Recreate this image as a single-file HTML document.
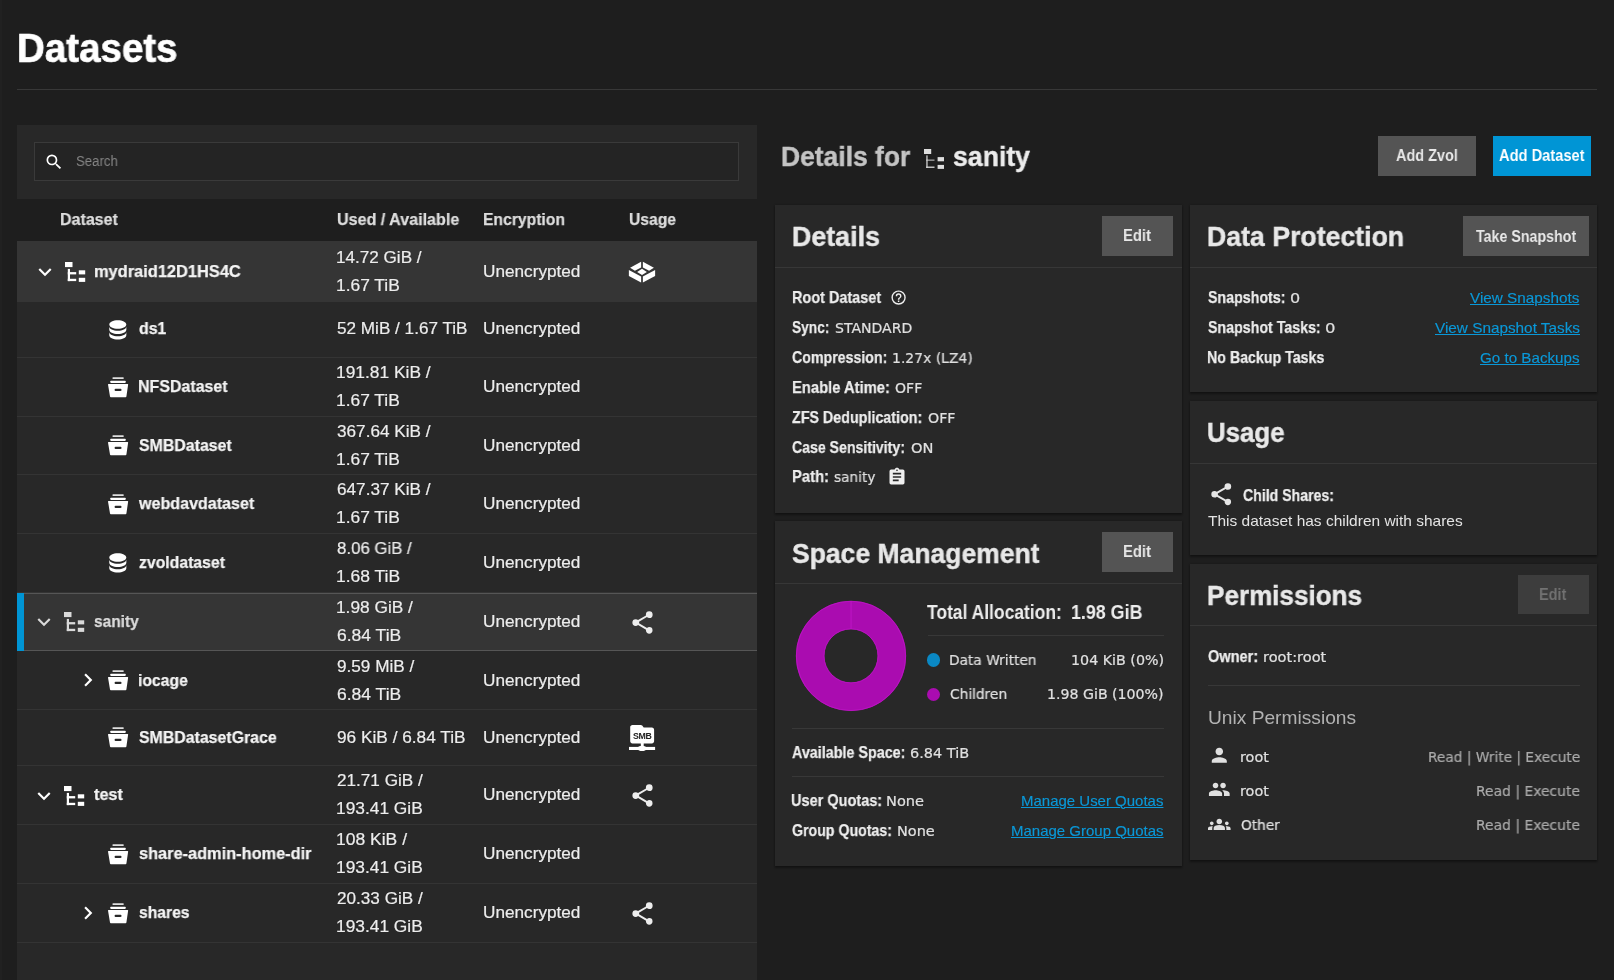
<!DOCTYPE html>
<html lang="en"><head><meta charset="utf-8"><title>Datasets</title>
<style>
html,body{margin:0;padding:0}
body{width:1614px;height:980px;overflow:hidden;background:#1e1e1e;position:relative;font-family:"Liberation Sans",sans-serif}
.strip{position:absolute;left:0;top:0;width:2px;height:980px;background:#212121}
.hr{position:absolute;height:1px;background:#383838}
.hr2{position:absolute;height:1px;background:#383838}
.panel{position:absolute;background:#282828}
.thead{position:absolute;background:#1e1e1e}
.search{position:absolute;background:#242424;border:1px solid #3a3a3a}
.row{position:absolute;left:17px;width:740px}
.row.hover{background:#353535}
.row.sel{background:#353535;box-sizing:border-box;border-top:1px solid #565656;border-bottom:1px solid #565656}
.selbar{position:absolute;left:17px;width:7px;background:#0095d5}
.sep{position:absolute;left:17px;width:740px;height:1px;background:#343434}
.i{position:absolute;display:block;overflow:visible;will-change:transform}
.btn{position:absolute;background:#545454}
.btn.blue{background:#0095d5}
.btn.dis{background:#3d3d3d}
.card{position:absolute;background:#282828;box-shadow:0 2px 2px rgba(0,0,0,.35),0 0 2px rgba(0,0,0,.25)}
.chr{position:absolute;height:1px;background:#373737}
.dot{position:absolute;width:13.6px;height:13.6px;border-radius:50%}
.t{position:absolute;will-change:transform;transform-origin:0 50%;white-space:pre;line-height:20px;font-family:"Liberation Sans",sans-serif}
.t.d{font-family:"DejaVu Sans","Liberation Sans",sans-serif;-webkit-text-stroke:.2px currentColor}
</style></head>
<body>
<div class="strip"></div>
<div class="hr" style="left:17px;top:89px;width:1580px"></div>
<div class="panel" style="left:17px;top:125px;width:740px;height:855px"></div>
<div class="thead" style="left:17px;top:199px;width:740px;height:42px"></div>
<div class="search" style="left:34px;top:142px;width:703px;height:37px"></div>
<svg class="i" style="left:43.80px;top:151.80px" width="20" height="20" viewBox="0 0 24 24"><path fill="#ffffff" d="M9.5,3A6.5,6.5 0 0,1 16,9.5C16,11.11 15.41,12.59 14.44,13.73L14.71,14H15.5L20.5,19L19,20.5L14,15.5V14.71L13.73,14.44C12.59,15.41 11.11,16 9.5,16A6.5,6.5 0 0,1 3,9.5A6.5,6.5 0 0,1 9.5,3M9.5,5C7,5 5,7 5,9.5C5,12 7,14 9.5,14C12,14 14,12 14,9.5C14,7 12,5 9.5,5Z"/></svg>
<div class="row hover" style="top:241px;height:61px"></div>
<svg class="i" style="left:32.25px;top:259.00px" width="26" height="26" viewBox="0 0 24 24"><path fill="#ffffff" d="M7.41,8.58L12,13.17L16.59,8.58L18,10L12,16L6,10L7.41,8.58Z"/></svg>
<svg class="i" style="left:64.70px;top:261.90px" width="21" height="21" viewBox="0 0 21 21" fill="#ffffff"><rect x="0" y="0" width="7.5" height="5.1"/><rect x="2.8" y="6.9" width="2.2" height="12.2"/><rect x="2.8" y="10.1" width="8.4" height="2.3"/><rect x="2.8" y="16.8" width="8.4" height="2.3"/><rect x="13.8" y="8.3" width="6.4" height="4.1"/><rect x="13.8" y="15.8" width="6.4" height="4.1"/></svg>
<svg class="i" style="left:628.00px;top:261.00px" width="28" height="22" viewBox="0 0 28 22" fill="#fff"><path d="M13.100.700L2.100 6.700L6.900 9.800L13.100 6.500z"/><path d="M14.900.700L25.900 6.700L21.100 9.800L14.900 6.500z"/><path d="M14 7.800L18.900 11.100L14 14.100L9.100 11.100z"/><path d="M.900 9.100L13.100 15.500V21.400L.900 14.900z"/><path d="M27.100 9.100L14.900 15.500V21.400L27.100 14.900z"/></svg>
<div class="sep" style="top:357px"></div>
<svg class="i" style="left:105.30px;top:316.50px" width="25.6" height="25.6" viewBox="0 0 24 24"><path fill="#fff" d="M12,3C7.58,3 4,4.79 4,7C4,9.21 7.58,11 12,11C16.42,11 20,9.21 20,7C20,4.79 16.42,3 12,3M4,9V12C4,14.21 7.58,16 12,16C16.42,16 20,14.21 20,12V9C20,11.21 16.42,13 12,13C7.58,13 4,11.21 4,9M4,14V17C4,19.21 7.58,21 12,21C16.42,21 20,19.21 20,17V14C20,16.21 16.42,18 12,18C7.58,18 4,16.21 4,14Z"/></svg>
<div class="sep" style="top:416px"></div>
<svg class="i" style="left:108.20px;top:376.95px" width="21" height="21" viewBox="0 0 21 21" fill="#fff"><rect x="4.4" y="0.2" width="11.4" height="1.9" rx=".8" opacity=".85"/><rect x="2.2" y="3.8" width="15.6" height="2.1" rx=".8"/><path fill-rule="evenodd" d="M0.500 6.900h19.100c.4 0 .6.300 .550.700l-1.750 12c-.1.400-.400.700-.800.700H2.800c-.4 0-.7-.3-.8-.7L0 7.600c-.05-.4.100-.700.500-.700zM7.500 11.800c-.5 0-.9.400-.9.900v.3c0 .5.400.9.900.9h5.100c.5 0 .9-.4.900-.9v-.3c0-.5-.4-.9-.9-.9z"/></svg>
<div class="sep" style="top:474px"></div>
<svg class="i" style="left:108.20px;top:435.45px" width="21" height="21" viewBox="0 0 21 21" fill="#fff"><rect x="4.4" y="0.2" width="11.4" height="1.9" rx=".8" opacity=".85"/><rect x="2.2" y="3.8" width="15.6" height="2.1" rx=".8"/><path fill-rule="evenodd" d="M0.500 6.900h19.100c.4 0 .6.300 .550.700l-1.750 12c-.1.400-.400.700-.800.700H2.800c-.4 0-.7-.3-.8-.7L0 7.600c-.05-.4.100-.700.500-.700zM7.500 11.800c-.5 0-.9.400-.9.900v.3c0 .5.400.9.900.9h5.100c.5 0 .9-.4.900-.9v-.3c0-.5-.4-.9-.9-.9z"/></svg>
<div class="sep" style="top:533px"></div>
<svg class="i" style="left:108.20px;top:493.95px" width="21" height="21" viewBox="0 0 21 21" fill="#fff"><rect x="4.4" y="0.2" width="11.4" height="1.9" rx=".8" opacity=".85"/><rect x="2.2" y="3.8" width="15.6" height="2.1" rx=".8"/><path fill-rule="evenodd" d="M0.500 6.900h19.100c.4 0 .6.300 .550.700l-1.750 12c-.1.400-.400.700-.800.700H2.800c-.4 0-.7-.3-.8-.7L0 7.600c-.05-.4.100-.700.500-.700zM7.500 11.800c-.5 0-.9.400-.9.900v.3c0 .5.400.9.900.9h5.100c.5 0 .9-.4.900-.9v-.3c0-.5-.4-.9-.9-.9z"/></svg>
<div class="sep" style="top:592px"></div>
<svg class="i" style="left:105.30px;top:550.00px" width="25.6" height="25.6" viewBox="0 0 24 24"><path fill="#fff" d="M12,3C7.58,3 4,4.79 4,7C4,9.21 7.58,11 12,11C16.42,11 20,9.21 20,7C20,4.79 16.42,3 12,3M4,9V12C4,14.21 7.58,16 12,16C16.42,16 20,14.21 20,12V9C20,11.21 16.42,13 12,13C7.58,13 4,11.21 4,9M4,14V17C4,19.21 7.58,21 12,21C16.42,21 20,19.21 20,17V14C20,16.21 16.42,18 12,18C7.58,18 4,16.21 4,14Z"/></svg>
<div class="row sel" style="top:593px;height:58px"></div>
<div class="selbar" style="top:593px;height:58px"></div>
<svg class="i" style="left:31.35px;top:609.10px" width="26" height="26" viewBox="0 0 24 24"><path fill="#dadada" d="M7.41,8.58L12,13.17L16.59,8.58L18,10L12,16L6,10L7.41,8.58Z"/></svg>
<svg class="i" style="left:63.80px;top:612.40px" width="21" height="21" viewBox="0 0 21 21" fill="#dadada"><rect x="0" y="0" width="7.5" height="5.1"/><rect x="2.8" y="6.9" width="2.2" height="12.2"/><rect x="2.8" y="10.1" width="8.4" height="2.3"/><rect x="2.8" y="16.8" width="8.4" height="2.3"/><rect x="13.8" y="8.3" width="6.4" height="4.1"/><rect x="13.8" y="15.8" width="6.4" height="4.1"/></svg>
<svg class="i" style="left:628.70px;top:608.60px" width="27" height="27" viewBox="0 0 24 24"><path fill="#ededed" d="M18,16.08C17.24,16.08 16.56,16.38 16.04,16.85L8.91,12.7C8.96,12.47 9,12.24 9,12C9,11.76 8.96,11.53 8.91,11.3L15.96,7.19C16.5,7.69 17.21,8 18,8A3,3 0 0,0 21,5A3,3 0 0,0 18,2A3,3 0 0,0 15,5C15,5.24 15.04,5.47 15.09,5.7L8.04,9.81C7.5,9.31 6.79,9 6,9A3,3 0 0,0 3,12A3,3 0 0,0 6,15C6.79,15 7.5,14.69 8.04,14.19L15.16,18.34C15.11,18.55 15.08,18.77 15.08,19C15.08,20.61 16.39,21.91 18,21.91C19.61,21.91 20.92,20.61 20.92,19A2.92,2.92 0 0,0 18,16.08Z"/></svg>
<div class="sep" style="top:709px"></div>
<svg class="i" style="left:108.20px;top:669.95px" width="21" height="21" viewBox="0 0 21 21" fill="#fff"><rect x="4.4" y="0.2" width="11.4" height="1.9" rx=".8" opacity=".85"/><rect x="2.2" y="3.8" width="15.6" height="2.1" rx=".8"/><path fill-rule="evenodd" d="M0.500 6.900h19.100c.4 0 .6.300 .550.700l-1.750 12c-.1.400-.400.700-.800.700H2.800c-.4 0-.7-.3-.8-.7L0 7.600c-.05-.4.100-.700.500-.700zM7.500 11.800c-.5 0-.9.400-.9.900v.3c0 .5.400.9.900.9h5.100c.5 0 .9-.4.900-.9v-.3c0-.5-.4-.9-.9-.9z"/></svg>
<svg class="i" style="left:75.10px;top:667.20px" width="26" height="26" viewBox="0 0 24 24"><path fill="#ffffff" d="M8.59,16.58L13.17,12L8.59,7.41L10,6L16,12L10,18L8.59,16.58Z"/></svg>
<div class="sep" style="top:765px"></div>
<svg class="i" style="left:108.20px;top:727.45px" width="21" height="21" viewBox="0 0 21 21" fill="#fff"><rect x="4.4" y="0.2" width="11.4" height="1.9" rx=".8" opacity=".85"/><rect x="2.2" y="3.8" width="15.6" height="2.1" rx=".8"/><path fill-rule="evenodd" d="M0.500 6.900h19.100c.4 0 .6.300 .550.700l-1.750 12c-.1.400-.400.700-.800.700H2.800c-.4 0-.7-.3-.8-.7L0 7.600c-.05-.4.100-.700.500-.700zM7.500 11.800c-.5 0-.9.400-.9.900v.3c0 .5.400.9.900.9h5.100c.5 0 .9-.4.900-.9v-.3c0-.5-.4-.9-.9-.9z"/></svg>
<svg class="i" style="left:628.00px;top:724.00px" width="28" height="28" viewBox="0 0 28 28"><path fill="#fff" d="M4.400.900h8.300c.6 0 1.100.200 1.500.700l1.500 2h8.200c1.200 0 2.200 1 2.200 2.200v11.500c0 1.200-1 2.200-2.200 2.200H4.400c-1.200 0-2.200-1-2.200-2.200V3.100c0-1.200 1-2.200 2.200-2.200z"/><rect fill="#fff" x="12.800" y="19" width="2.900" height="5"/><rect fill="#fff" x="1" y="22.900" width="26.100" height="3.100"/><rect fill="#fff" x="10" y="21.900" width="8.100" height="5.100" rx="2.400"/><text x="14.300" y="14.800" text-anchor="middle" font-family="Liberation Sans,sans-serif" font-size="8.8" font-weight="700" fill="#222" letter-spacing="-.3">SMB</text></svg>
<div class="sep" style="top:824px"></div>
<svg class="i" style="left:31.35px;top:782.60px" width="26" height="26" viewBox="0 0 24 24"><path fill="#ffffff" d="M7.41,8.58L12,13.17L16.59,8.58L18,10L12,16L6,10L7.41,8.58Z"/></svg>
<svg class="i" style="left:63.80px;top:785.90px" width="21" height="21" viewBox="0 0 21 21" fill="#ffffff"><rect x="0" y="0" width="7.5" height="5.1"/><rect x="2.8" y="6.9" width="2.2" height="12.2"/><rect x="2.8" y="10.1" width="8.4" height="2.3"/><rect x="2.8" y="16.8" width="8.4" height="2.3"/><rect x="13.8" y="8.3" width="6.4" height="4.1"/><rect x="13.8" y="15.8" width="6.4" height="4.1"/></svg>
<svg class="i" style="left:628.70px;top:782.10px" width="27" height="27" viewBox="0 0 24 24"><path fill="#ededed" d="M18,16.08C17.24,16.08 16.56,16.38 16.04,16.85L8.91,12.7C8.96,12.47 9,12.24 9,12C9,11.76 8.96,11.53 8.91,11.3L15.96,7.19C16.5,7.69 17.21,8 18,8A3,3 0 0,0 21,5A3,3 0 0,0 18,2A3,3 0 0,0 15,5C15,5.24 15.04,5.47 15.09,5.7L8.04,9.81C7.5,9.31 6.79,9 6,9A3,3 0 0,0 3,12A3,3 0 0,0 6,15C6.79,15 7.5,14.69 8.04,14.19L15.16,18.34C15.11,18.55 15.08,18.77 15.08,19C15.08,20.61 16.39,21.91 18,21.91C19.61,21.91 20.92,20.61 20.92,19A2.92,2.92 0 0,0 18,16.08Z"/></svg>
<div class="sep" style="top:883px"></div>
<svg class="i" style="left:108.20px;top:843.95px" width="21" height="21" viewBox="0 0 21 21" fill="#fff"><rect x="4.4" y="0.2" width="11.4" height="1.9" rx=".8" opacity=".85"/><rect x="2.2" y="3.8" width="15.6" height="2.1" rx=".8"/><path fill-rule="evenodd" d="M0.500 6.900h19.100c.4 0 .6.300 .550.700l-1.750 12c-.1.400-.400.700-.800.700H2.800c-.4 0-.7-.3-.8-.7L0 7.600c-.05-.4.100-.700.500-.700zM7.500 11.800c-.5 0-.9.400-.9.900v.3c0 .5.400.9.900.9h5.100c.5 0 .9-.4.900-.9v-.3c0-.5-.4-.9-.9-.9z"/></svg>
<div class="sep" style="top:942px"></div>
<svg class="i" style="left:108.20px;top:902.95px" width="21" height="21" viewBox="0 0 21 21" fill="#fff"><rect x="4.4" y="0.2" width="11.4" height="1.9" rx=".8" opacity=".85"/><rect x="2.2" y="3.8" width="15.6" height="2.1" rx=".8"/><path fill-rule="evenodd" d="M0.500 6.900h19.100c.4 0 .6.300 .550.700l-1.750 12c-.1.400-.400.700-.800.700H2.800c-.4 0-.7-.3-.8-.7L0 7.600c-.05-.4.100-.700.500-.700zM7.500 11.800c-.5 0-.9.400-.9.900v.3c0 .5.400.9.900.9h5.100c.5 0 .9-.4.900-.9v-.3c0-.5-.4-.9-.9-.9z"/></svg>
<svg class="i" style="left:75.10px;top:900.20px" width="26" height="26" viewBox="0 0 24 24"><path fill="#ffffff" d="M8.59,16.58L13.17,12L8.59,7.41L10,6L16,12L10,18L8.59,16.58Z"/></svg>
<svg class="i" style="left:628.70px;top:900.10px" width="27" height="27" viewBox="0 0 24 24"><path fill="#ededed" d="M18,16.08C17.24,16.08 16.56,16.38 16.04,16.85L8.91,12.7C8.96,12.47 9,12.24 9,12C9,11.76 8.96,11.53 8.91,11.3L15.96,7.19C16.5,7.69 17.21,8 18,8A3,3 0 0,0 21,5A3,3 0 0,0 18,2A3,3 0 0,0 15,5C15,5.24 15.04,5.47 15.09,5.7L8.04,9.81C7.5,9.31 6.79,9 6,9A3,3 0 0,0 3,12A3,3 0 0,0 6,15C6.79,15 7.5,14.69 8.04,14.19L15.16,18.34C15.11,18.55 15.08,18.77 15.08,19C15.08,20.61 16.39,21.91 18,21.91C19.61,21.91 20.92,20.61 20.92,19A2.92,2.92 0 0,0 18,16.08Z"/></svg>
<svg class="i" style="left:924.1px;top:148.9px" width="21" height="21" viewBox="0 0 21 21" fill="#dedede"><rect x="0" y="0" width="7.2" height="5"/><rect x="2.2" y="6.4" width="1.5" height="12.6" opacity=".8"/><rect x="2.2" y="10.500" width="8.3" height="1.3" opacity=".7"/><rect x="2.2" y="17.5" width="8.3" height="1.5" opacity=".85"/><rect x="13.6" y="8.1" width="6.4" height="4.2"/><rect x="13.6" y="15.9" width="6.4" height="4"/></svg>
<div class="btn" style="left:1378px;top:136px;width:98px;height:40px"></div>
<div class="btn blue" style="left:1493px;top:136px;width:98px;height:40px"></div>
<div class="card" style="left:775px;top:205px;width:407px;height:308px"></div>
<div class="chr" style="left:775px;top:267px;width:407px"></div>
<div class="card" style="left:775px;top:521px;width:407px;height:345px"></div>
<div class="chr" style="left:775px;top:583px;width:407px"></div>
<div class="card" style="left:1190px;top:205px;width:407px;height:187px"></div>
<div class="chr" style="left:1190px;top:267px;width:407px"></div>
<div class="card" style="left:1190px;top:401px;width:407px;height:154px"></div>
<div class="chr" style="left:1190px;top:463px;width:407px"></div>
<div class="card" style="left:1190px;top:564px;width:407px;height:296px"></div>
<div class="chr" style="left:1190px;top:625px;width:407px"></div>
<div class="btn" style="left:1102px;top:216px;width:71px;height:40px"></div>
<div class="btn" style="left:1102px;top:532px;width:71px;height:40px"></div>
<div class="btn" style="left:1463px;top:216px;width:126px;height:40px"></div>
<div class="btn dis" style="left:1518px;top:575px;width:71px;height:39px"></div>
<svg class="i" style="left:890.00px;top:288.80px" width="17.2" height="17.2" viewBox="0 0 24 24"><path fill="#f0f0f0" d="M11,18H13V16H11V18M12,2A10,10 0 0,0 2,12A10,10 0 0,0 12,22A10,10 0 0,0 22,12A10,10 0 0,0 12,2M12,20C7.59,20 4,16.41 4,12C4,7.59 7.59,4 12,4C16.41,4 20,7.59 20,12C20,16.41 16.41,20 12,20M12,6A4,4 0 0,0 8,10H10A2,2 0 0,1 12,8A2,2 0 0,1 14,10C14,12 11,11.75 11,15H13C13,12.75 16,12.5 16,10A4,4 0 0,0 12,6Z"/></svg>
<svg class="i" style="left:886.90px;top:467.10px" width="20" height="20" viewBox="0 0 24 24"><path fill="#f0f0f0" d="M17,9H7V7H17M17,13H7V11H17M14,17H7V15H14M12,3A1,1 0 0,1 13,4A1,1 0 0,1 12,5A1,1 0 0,1 11,4A1,1 0 0,1 12,3M19,3H14.82C14.4,1.84 13.3,1 12,1C10.7,1 9.6,1.84 9.18,3H5A2,2 0 0,0 3,5V19A2,2 0 0,0 5,21H19A2,2 0 0,0 21,19V5A2,2 0 0,0 19,3Z"/></svg>
<svg class="i" style="left:1207.90px;top:481.20px" width="26.5" height="26.5" viewBox="0 0 24 24"><path fill="#e6e6e6" d="M18,16.08C17.24,16.08 16.56,16.38 16.04,16.85L8.91,12.7C8.96,12.47 9,12.24 9,12C9,11.76 8.96,11.53 8.91,11.3L15.96,7.19C16.5,7.69 17.21,8 18,8A3,3 0 0,0 21,5A3,3 0 0,0 18,2A3,3 0 0,0 15,5C15,5.24 15.04,5.47 15.09,5.7L8.04,9.81C7.5,9.31 6.79,9 6,9A3,3 0 0,0 3,12A3,3 0 0,0 6,15C6.79,15 7.5,14.69 8.04,14.19L15.16,18.34C15.11,18.55 15.08,18.77 15.08,19C15.08,20.61 16.39,21.91 18,21.91C19.61,21.91 20.92,20.61 20.92,19A2.92,2.92 0 0,0 18,16.08Z"/></svg>
<div class="hr2" style="left:1208px;top:685px;width:372px"></div>
<svg class="i" style="left:1207.90px;top:744.20px" width="22.6" height="22.6" viewBox="0 0 24 24"><path fill="#e0e0e0" d="M12 12c2.21 0 4-1.79 4-4s-1.79-4-4-4-4 1.79-4 4 1.79 4 4 4zm0 2c-2.67 0-8 1.34-8 4v2h16v-2c0-2.660-5.330-4-8-4z"/></svg>
<svg class="i" style="left:1208.00px;top:778.10px" width="22.6" height="22.6" viewBox="0 0 24 24"><path fill="#e0e0e0" d="M16 11c1.66 0 2.99-1.34 2.99-3S17.66 5 16 5c-1.66 0-3 1.34-3 3s1.34 3 3 3zm-8 0c1.66 0 2.99-1.34 2.99-3S9.66 5 8 5C6.34 5 5 6.34 5 8s1.34 3 3 3zm0 2c-2.33 0-7 1.17-7 3.5V19h14v-2.500c0-2.33-4.67-3.5-7-3.500zm8 0c-.29 0-.62.02-.97.05 1.16.84 1.970 1.97 1.970 3.450V19h6v-2.500c0-2.330-4.670-3.500-7-3.500z"/></svg>
<svg class="i" style="left:1208.30px;top:812.50px" width="22.6" height="22.6" viewBox="0 0 24 24"><path fill="#e0e0e0" d="M12 12.75c1.63 0 3.07.39 4.24.9 1.08.48 1.76 1.56 1.76 2.73V18H6v-1.61c0-1.18.68-2.26 1.76-2.73 1.17-.52 2.61-.91 4.24-.91zM4 13c1.1 0 2-.9 2-2s-.9-2-2-2-2 .9-2 2 .9 2 2 2zm1.13 1.1c-.37-.06-.74-.1-1.13-.1-.99 0-1.93.21-2.78.58C.48 14.9 0 15.62 0 16.43V18h4.5v-1.61c0-.83.23-1.61.63-2.29zM20 13c1.1 0 2-.9 2-2s-.9-2-2-2-2 .9-2 2 .9 2 2 2zm4 3.43c0-.81-.48-1.53-1.22-1.85-.85-.37-1.79-.58-2.78-.58-.39 0-.76.04-1.13.1.4.68.63 1.46.63 2.29V18H24v-1.570zM12 6c1.66 0 3 1.34 3 3s-1.34 3-3 3-3-1.340-3-3 1.340-3 3-3z"/></svg>
<svg class="i" style="left:795px;top:600px" width="112" height="112" viewBox="0 0 112 112"><circle cx="56" cy="55.900" r="40.850" fill="none" stroke="#aa0cb0" stroke-width="28.300"/><circle cx="56" cy="55.900" r="54.700" fill="none" stroke="#c015c8" stroke-width=".8"/><circle cx="56" cy="55.900" r="27" fill="none" stroke="#c015c8" stroke-width=".8"/><rect x="55.600" y="1" width=".9" height="28" fill="#c015c8"/></svg>
<div class="hr2" style="left:928px;top:635px;width:236px"></div>
<div class="dot" style="left:926.7px;top:653.200px;background:#0a88c4"></div>
<div class="dot" style="left:926.7px;top:687.600px;background:#aa0cb0"></div>
<div class="hr2" style="left:792px;top:728px;width:372px"></div>
<div class="hr2" style="left:792px;top:776px;width:372px"></div>
<span class="t" style="left:16.67px;top:38.00px;font-size:39.8px;color:#ffffff;transform:scaleX(0.9675);font-weight:700;-webkit-text-stroke:.7px currentColor;">Datasets</span>
<span class="t" style="left:76.36px;top:151.00px;font-size:14px;color:#858585;transform:scaleX(0.9442);">Search</span>
<span class="t" style="left:60.06px;top:210.00px;font-size:17px;color:#dedede;transform:scaleX(0.9426);font-weight:700;-webkit-text-stroke:.25px currentColor;">Dataset</span>
<span class="t" style="left:336.55px;top:210.00px;font-size:17px;color:#dedede;transform:scaleX(0.9469);font-weight:700;-webkit-text-stroke:.25px currentColor;">Used / Available</span>
<span class="t" style="left:482.78px;top:210.00px;font-size:17px;color:#dedede;transform:scaleX(0.9230);font-weight:700;-webkit-text-stroke:.25px currentColor;">Encryption</span>
<span class="t" style="left:628.78px;top:210.00px;font-size:17px;color:#dedede;transform:scaleX(0.9220);font-weight:700;-webkit-text-stroke:.25px currentColor;">Usage</span>
<span class="t" style="left:94.14px;top:262.00px;font-size:17px;color:#f4f4f4;transform:scaleX(0.9649);font-weight:700;-webkit-text-stroke:.25px currentColor;">mydraid12D1HS4C</span>
<span class="t" style="left:335.99px;top:248.00px;font-size:17px;color:#ededed;transform:scaleX(1.0060);-webkit-text-stroke:.2px currentColor;">14.72 GiB /</span>
<span class="t" style="left:335.98px;top:276.00px;font-size:17px;color:#ededed;transform:scaleX(1.0230);-webkit-text-stroke:.2px currentColor;">1.67 TiB</span>
<span class="t" style="left:482.59px;top:262.00px;font-size:17px;color:#ededed;transform:scaleX(1.0105);-webkit-text-stroke:.2px currentColor;">Unencrypted</span>
<span class="t" style="left:139.20px;top:319.00px;font-size:17px;color:#f4f4f4;transform:scaleX(0.9310);font-weight:700;-webkit-text-stroke:.25px currentColor;">ds1</span>
<span class="t" style="left:337.00px;top:319.00px;font-size:17px;color:#ededed;transform:scaleX(1.0078);-webkit-text-stroke:.2px currentColor;">52 MiB / 1.67 TiB</span>
<span class="t" style="left:482.59px;top:319.00px;font-size:17px;color:#ededed;transform:scaleX(1.0105);-webkit-text-stroke:.2px currentColor;">Unencrypted</span>
<span class="t" style="left:137.86px;top:377.00px;font-size:17px;color:#f4f4f4;transform:scaleX(0.9389);font-weight:700;-webkit-text-stroke:.25px currentColor;">NFSDataset</span>
<span class="t" style="left:335.98px;top:363.00px;font-size:17px;color:#ededed;transform:scaleX(1.0217);-webkit-text-stroke:.2px currentColor;">191.81 KiB /</span>
<span class="t" style="left:335.98px;top:391.00px;font-size:17px;color:#ededed;transform:scaleX(1.0230);-webkit-text-stroke:.2px currentColor;">1.67 TiB</span>
<span class="t" style="left:482.59px;top:377.00px;font-size:17px;color:#ededed;transform:scaleX(1.0105);-webkit-text-stroke:.2px currentColor;">Unencrypted</span>
<span class="t" style="left:138.80px;top:436.00px;font-size:17px;color:#f4f4f4;transform:scaleX(0.9354);font-weight:700;-webkit-text-stroke:.25px currentColor;">SMBDataset</span>
<span class="t" style="left:337.00px;top:422.00px;font-size:17px;color:#ededed;transform:scaleX(1.0108);-webkit-text-stroke:.2px currentColor;">367.64 KiB /</span>
<span class="t" style="left:335.98px;top:450.00px;font-size:17px;color:#ededed;transform:scaleX(1.0230);-webkit-text-stroke:.2px currentColor;">1.67 TiB</span>
<span class="t" style="left:482.59px;top:436.00px;font-size:17px;color:#ededed;transform:scaleX(1.0105);-webkit-text-stroke:.2px currentColor;">Unencrypted</span>
<span class="t" style="left:138.80px;top:494.00px;font-size:17px;color:#f4f4f4;transform:scaleX(0.9459);font-weight:700;-webkit-text-stroke:.25px currentColor;">webdavdataset</span>
<span class="t" style="left:337.00px;top:480.00px;font-size:17px;color:#ededed;transform:scaleX(1.0108);-webkit-text-stroke:.2px currentColor;">647.37 KiB /</span>
<span class="t" style="left:335.98px;top:508.00px;font-size:17px;color:#ededed;transform:scaleX(1.0230);-webkit-text-stroke:.2px currentColor;">1.67 TiB</span>
<span class="t" style="left:482.59px;top:494.00px;font-size:17px;color:#ededed;transform:scaleX(1.0105);-webkit-text-stroke:.2px currentColor;">Unencrypted</span>
<span class="t" style="left:138.80px;top:553.00px;font-size:17px;color:#f4f4f4;transform:scaleX(0.9280);font-weight:700;-webkit-text-stroke:.25px currentColor;">zvoldataset</span>
<span class="t" style="left:337.00px;top:539.00px;font-size:17px;color:#ededed;transform:scaleX(0.9895);-webkit-text-stroke:.2px currentColor;">8.06 GiB /</span>
<span class="t" style="left:335.97px;top:567.00px;font-size:17px;color:#ededed;transform:scaleX(1.0279);-webkit-text-stroke:.2px currentColor;">1.68 TiB</span>
<span class="t" style="left:482.59px;top:553.00px;font-size:17px;color:#ededed;transform:scaleX(1.0105);-webkit-text-stroke:.2px currentColor;">Unencrypted</span>
<span class="t" style="left:94.30px;top:612.00px;font-size:17px;color:#dcdcdc;transform:scaleX(0.9102);font-weight:700;-webkit-text-stroke:.25px currentColor;">sanity</span>
<span class="t" style="left:335.98px;top:598.00px;font-size:17px;color:#ededed;transform:scaleX(1.0173);-webkit-text-stroke:.2px currentColor;">1.98 GiB /</span>
<span class="t" style="left:337.00px;top:626.00px;font-size:17px;color:#ededed;transform:scaleX(1.0290);-webkit-text-stroke:.2px currentColor;">6.84 TiB</span>
<span class="t" style="left:482.59px;top:612.00px;font-size:17px;color:#ededed;transform:scaleX(1.0105);-webkit-text-stroke:.2px currentColor;">Unencrypted</span>
<span class="t" style="left:137.88px;top:671.00px;font-size:17px;color:#f4f4f4;transform:scaleX(0.9245);font-weight:700;-webkit-text-stroke:.25px currentColor;">iocage</span>
<span class="t" style="left:337.00px;top:657.00px;font-size:17px;color:#ededed;transform:scaleX(1.0091);-webkit-text-stroke:.2px currentColor;">9.59 MiB /</span>
<span class="t" style="left:337.00px;top:685.00px;font-size:17px;color:#ededed;transform:scaleX(1.0290);-webkit-text-stroke:.2px currentColor;">6.84 TiB</span>
<span class="t" style="left:482.59px;top:671.00px;font-size:17px;color:#ededed;transform:scaleX(1.0105);-webkit-text-stroke:.2px currentColor;">Unencrypted</span>
<span class="t" style="left:138.80px;top:728.00px;font-size:17px;color:#f4f4f4;transform:scaleX(0.9340);font-weight:700;-webkit-text-stroke:.25px currentColor;">SMBDatasetGrace</span>
<span class="t" style="left:337.00px;top:728.00px;font-size:17px;color:#ededed;transform:scaleX(1.0151);-webkit-text-stroke:.2px currentColor;">96 KiB / 6.84 TiB</span>
<span class="t" style="left:482.59px;top:728.00px;font-size:17px;color:#ededed;transform:scaleX(1.0105);-webkit-text-stroke:.2px currentColor;">Unencrypted</span>
<span class="t" style="left:94.30px;top:785.00px;font-size:17px;color:#f4f4f4;transform:scaleX(0.9567);font-weight:700;-webkit-text-stroke:.25px currentColor;">test</span>
<span class="t" style="left:337.00px;top:771.00px;font-size:17px;color:#ededed;transform:scaleX(1.0082);-webkit-text-stroke:.2px currentColor;">21.71 GiB /</span>
<span class="t" style="left:335.98px;top:799.00px;font-size:17px;color:#ededed;transform:scaleX(1.0202);-webkit-text-stroke:.2px currentColor;">193.41 GiB</span>
<span class="t" style="left:482.59px;top:785.00px;font-size:17px;color:#ededed;transform:scaleX(1.0105);-webkit-text-stroke:.2px currentColor;">Unencrypted</span>
<span class="t" style="left:138.80px;top:844.00px;font-size:17px;color:#f4f4f4;transform:scaleX(0.9611);font-weight:700;-webkit-text-stroke:.25px currentColor;">share-admin-home-dir</span>
<span class="t" style="left:335.97px;top:830.00px;font-size:17px;color:#ededed;transform:scaleX(1.0294);-webkit-text-stroke:.2px currentColor;">108 KiB /</span>
<span class="t" style="left:335.98px;top:858.00px;font-size:17px;color:#ededed;transform:scaleX(1.0202);-webkit-text-stroke:.2px currentColor;">193.41 GiB</span>
<span class="t" style="left:482.59px;top:844.00px;font-size:17px;color:#ededed;transform:scaleX(1.0105);-webkit-text-stroke:.2px currentColor;">Unencrypted</span>
<span class="t" style="left:138.80px;top:903.00px;font-size:17px;color:#f4f4f4;transform:scaleX(0.9222);font-weight:700;-webkit-text-stroke:.25px currentColor;">shares</span>
<span class="t" style="left:337.00px;top:889.00px;font-size:17px;color:#ededed;transform:scaleX(1.0082);-webkit-text-stroke:.2px currentColor;">20.33 GiB /</span>
<span class="t" style="left:335.98px;top:917.00px;font-size:17px;color:#ededed;transform:scaleX(1.0202);-webkit-text-stroke:.2px currentColor;">193.41 GiB</span>
<span class="t" style="left:482.59px;top:903.00px;font-size:17px;color:#ededed;transform:scaleX(1.0105);-webkit-text-stroke:.2px currentColor;">Unencrypted</span>
<span class="t" style="left:781.26px;top:147.00px;font-size:28px;color:#c4c4c4;transform:scaleX(0.9441);font-weight:700;-webkit-text-stroke:.45px currentColor;">Details for</span>
<span class="t" style="left:953.25px;top:147.00px;font-size:28px;color:#ececec;transform:scaleX(0.9512);font-weight:700;-webkit-text-stroke:.45px currentColor;">sanity</span>
<span class="t" style="left:1396.00px;top:145.00px;font-size:16.5px;color:#e8e8e8;transform:scaleX(0.8757);font-weight:700;">Add Zvol</span>
<span class="t" style="left:1499.00px;top:145.00px;font-size:16.5px;color:#ffffff;transform:scaleX(0.8885);font-weight:700;">Add Dataset</span>
<span class="t" style="left:791.94px;top:227.00px;font-size:28px;color:#e8e8e8;transform:scaleX(0.9578);font-weight:700;-webkit-text-stroke:.45px currentColor;">Details</span>
<span class="t" style="left:791.75px;top:544.00px;font-size:28px;color:#e8e8e8;transform:scaleX(0.9469);font-weight:700;-webkit-text-stroke:.45px currentColor;">Space Management</span>
<span class="t" style="left:1207.25px;top:227.00px;font-size:28px;color:#e8e8e8;transform:scaleX(0.9527);font-weight:700;-webkit-text-stroke:.45px currentColor;">Data Protection</span>
<span class="t" style="left:1207.28px;top:423.00px;font-size:28px;color:#e8e8e8;transform:scaleX(0.9229);font-weight:700;-webkit-text-stroke:.45px currentColor;">Usage</span>
<span class="t" style="left:1207.27px;top:586.00px;font-size:28px;color:#e8e8e8;transform:scaleX(0.9309);font-weight:700;-webkit-text-stroke:.45px currentColor;">Permissions</span>
<span class="t" style="left:1123.00px;top:225.00px;font-size:16.5px;color:#e8e8e8;transform:scaleX(0.8967);font-weight:700;">Edit</span>
<span class="t" style="left:1123.00px;top:541.00px;font-size:16.5px;color:#e8e8e8;transform:scaleX(0.8967);font-weight:700;">Edit</span>
<span class="t" style="left:1475.50px;top:226.00px;font-size:16.5px;color:#e8e8e8;transform:scaleX(0.8621);font-weight:700;">Take Snapshot</span>
<span class="t" style="left:1539.12px;top:584.00px;font-size:16.5px;color:#727272;transform:scaleX(0.8767);font-weight:700;">Edit</span>
<span class="t" style="left:791.55px;top:288.00px;font-size:17px;color:#ededed;transform:scaleX(0.8500);font-weight:700;-webkit-text-stroke:.25px currentColor;">Root Dataset</span>
<span class="t" style="left:792.40px;top:318.00px;font-size:17px;color:#ededed;transform:scaleX(0.8067);font-weight:700;-webkit-text-stroke:.25px currentColor;">Sync:</span>
<span class="t d" style="left:834.70px;top:318.00px;font-size:14px;color:#e0e0e0;transform:scaleX(1.0039);">STANDARD</span>
<span class="t" style="left:792.40px;top:348.00px;font-size:17px;color:#ededed;transform:scaleX(0.8336);font-weight:700;-webkit-text-stroke:.25px currentColor;">Compression:</span>
<span class="t d" style="left:892.41px;top:348.00px;font-size:14px;color:#e0e0e0;transform:scaleX(0.9949);">1.27x (LZ4)</span>
<span class="t" style="left:791.53px;top:378.00px;font-size:17px;color:#ededed;transform:scaleX(0.8691);font-weight:700;-webkit-text-stroke:.25px currentColor;">Enable Atime:</span>
<span class="t d" style="left:894.80px;top:378.00px;font-size:14px;color:#e0e0e0;transform:scaleX(1.0037);">OFF</span>
<span class="t" style="left:792.40px;top:408.00px;font-size:17px;color:#ededed;transform:scaleX(0.8409);font-weight:700;-webkit-text-stroke:.25px currentColor;">ZFS Deduplication:</span>
<span class="t d" style="left:928.40px;top:408.00px;font-size:14px;color:#e0e0e0;transform:scaleX(1.0148);">OFF</span>
<span class="t" style="left:792.40px;top:438.00px;font-size:17px;color:#ededed;transform:scaleX(0.8296);font-weight:700;-webkit-text-stroke:.25px currentColor;">Case Sensitivity:</span>
<span class="t d" style="left:911.10px;top:438.00px;font-size:14px;color:#e0e0e0;transform:scaleX(1.0450);">ON</span>
<span class="t" style="left:791.53px;top:467.00px;font-size:17px;color:#ededed;transform:scaleX(0.8725);font-weight:700;-webkit-text-stroke:.25px currentColor;">Path:</span>
<span class="t d" style="left:833.90px;top:467.00px;font-size:14px;color:#e0e0e0;transform:scaleX(0.9738);">sanity</span>
<span class="t" style="left:1208.20px;top:288.00px;font-size:17px;color:#ededed;transform:scaleX(0.8363);font-weight:700;-webkit-text-stroke:.25px currentColor;">Snapshots:</span>
<span class="t d" style="left:1289.86px;top:288.00px;font-size:14px;color:#e0e0e0;transform:scaleX(1.1429);">0</span>
<span class="t" style="left:1208.20px;top:318.00px;font-size:17px;color:#ededed;transform:scaleX(0.8361);font-weight:700;-webkit-text-stroke:.25px currentColor;">Snapshot Tasks:</span>
<span class="t d" style="left:1324.63px;top:318.00px;font-size:14px;color:#e0e0e0;transform:scaleX(1.1714);">0</span>
<span class="t" style="left:1207.36px;top:348.00px;font-size:17px;color:#ededed;transform:scaleX(0.8353);font-weight:700;-webkit-text-stroke:.25px currentColor;">No Backup Tasks</span>
<span class="t" style="left:1470.20px;top:288.00px;font-size:14.5px;color:#0a98d8;transform:scaleX(1.0538);text-decoration:underline;text-underline-offset:1px;text-decoration-thickness:1.2px;-webkit-text-stroke:.15px currentColor;">View Snapshots</span>
<span class="t" style="left:1435.10px;top:318.00px;font-size:14.5px;color:#0a98d8;transform:scaleX(1.0562);text-decoration:underline;text-underline-offset:1px;text-decoration-thickness:1.2px;-webkit-text-stroke:.15px currentColor;">View Snapshot Tasks</span>
<span class="t" style="left:1480.40px;top:348.00px;font-size:14.5px;color:#0a98d8;transform:scaleX(1.0463);text-decoration:underline;text-underline-offset:1px;text-decoration-thickness:1.2px;-webkit-text-stroke:.15px currentColor;">Go to Backups</span>
<span class="t" style="left:1243.30px;top:486.00px;font-size:17px;color:#ededed;transform:scaleX(0.8296);font-weight:700;-webkit-text-stroke:.25px currentColor;">Child Shares:</span>
<span class="t" style="left:1208.40px;top:511.00px;font-size:14.5px;color:#e4e4e4;transform:scaleX(1.0676);">This dataset has children with shares</span>
<span class="t" style="left:1208.20px;top:647.00px;font-size:17px;color:#ededed;transform:scaleX(0.8561);font-weight:700;-webkit-text-stroke:.25px currentColor;">Owner:</span>
<span class="t d" style="left:1262.56px;top:647.00px;font-size:14px;color:#e0e0e0;transform:scaleX(1.0400);">root:root</span>
<span class="t" style="left:1207.86px;top:708.00px;font-size:18.5px;color:#b2b2b2;transform:scaleX(1.0362);">Unix Permissions</span>
<span class="t d" style="left:1239.97px;top:747.00px;font-size:14px;color:#e0e0e0;transform:scaleX(1.0296);">root</span>
<span class="t d" style="left:1427.62px;top:747.00px;font-size:14px;color:#ababab;transform:scaleX(0.9799);">Read | Write | Execute</span>
<span class="t d" style="left:1239.97px;top:781.00px;font-size:14px;color:#e0e0e0;transform:scaleX(1.0296);">root</span>
<span class="t d" style="left:1476.31px;top:781.00px;font-size:14px;color:#ababab;transform:scaleX(0.9922);">Read | Execute</span>
<span class="t d" style="left:1241.00px;top:815.00px;font-size:14px;color:#e0e0e0;transform:scaleX(0.9750);">Other</span>
<span class="t d" style="left:1476.31px;top:815.00px;font-size:14px;color:#ababab;transform:scaleX(0.9922);">Read | Execute</span>
<span class="t" style="left:927.10px;top:602.00px;font-size:19.5px;color:#ededed;transform:scaleX(0.8953);font-weight:700;">Total Allocation:</span>
<span class="t" style="left:1070.68px;top:602.00px;font-size:19.5px;color:#ededed;transform:scaleX(0.9158);font-weight:700;">1.98 GiB</span>
<span class="t d" style="left:948.82px;top:650.00px;font-size:14px;color:#e0e0e0;transform:scaleX(0.9816);">Data Written</span>
<span class="t d" style="left:1070.58px;top:650.00px;font-size:14px;color:#e0e0e0;transform:scaleX(1.0178);">104 KiB (0%)</span>
<span class="t d" style="left:949.80px;top:684.00px;font-size:14px;color:#e0e0e0;transform:scaleX(0.9793);">Children</span>
<span class="t d" style="left:1046.99px;top:684.00px;font-size:14px;color:#e0e0e0;transform:scaleX(1.0105);">1.98 GiB (100%)</span>
<span class="t" style="left:792.20px;top:743.00px;font-size:17px;color:#ededed;transform:scaleX(0.8436);font-weight:700;-webkit-text-stroke:.25px currentColor;">Available Space:</span>
<span class="t d" style="left:910.07px;top:743.00px;font-size:14px;color:#e0e0e0;transform:scaleX(1.0321);">6.84 TiB</span>
<span class="t" style="left:791.35px;top:791.00px;font-size:17px;color:#ededed;transform:scaleX(0.8538);font-weight:700;-webkit-text-stroke:.25px currentColor;">User Quotas:</span>
<span class="t d" style="left:886.36px;top:791.00px;font-size:14px;color:#e0e0e0;transform:scaleX(1.0400);">None</span>
<span class="t" style="left:792.20px;top:821.00px;font-size:17px;color:#ededed;transform:scaleX(0.8336);font-weight:700;-webkit-text-stroke:.25px currentColor;">Group Quotas:</span>
<span class="t d" style="left:897.07px;top:821.00px;font-size:14px;color:#e0e0e0;transform:scaleX(1.0343);">None</span>
<span class="t" style="left:1021.40px;top:791.00px;font-size:14.5px;color:#0a98d8;transform:scaleX(1.0333);text-decoration:underline;text-underline-offset:1px;text-decoration-thickness:1.2px;-webkit-text-stroke:.15px currentColor;">Manage User Quotas</span>
<span class="t" style="left:1011.00px;top:821.00px;font-size:14.5px;color:#0a98d8;transform:scaleX(1.0338);text-decoration:underline;text-underline-offset:1px;text-decoration-thickness:1.2px;-webkit-text-stroke:.15px currentColor;">Manage Group Quotas</span>
</body></html>
